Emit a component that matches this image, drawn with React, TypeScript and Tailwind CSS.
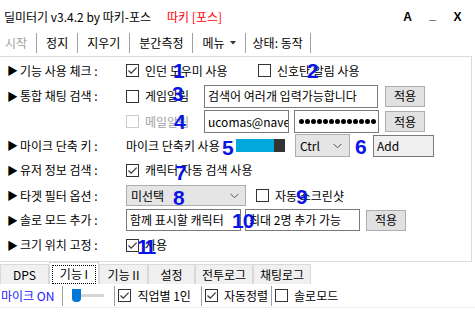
import React from "react";

function Check({ checked = false, disabled = false }: { checked?: boolean; disabled?: boolean }) {
  return (
    <span
      className={
        "flex h-[13px] w-[13px] shrink-0 items-center justify-center border bg-white " +
        (disabled ? "border-[#cccccc]" : "border-[#333333]")
      }
    >
      {checked && (
        <svg width="11" height="11" viewBox="0 0 11 11">
          <path d="M1.5 5.5 L4.2 8.2 L9.6 2.6" fill="none" stroke="#333" strokeWidth="1.2" />
        </svg>
      )}
    </span>
  );
}

function Chevron() {
  return (
    <svg width="9" height="6" viewBox="0 0 9 6">
      <path d="M0.5 0.8 L4.5 4.8 L8.5 0.8" fill="none" stroke="#555" strokeWidth="1" />
    </svg>
  );
}

function Btn({ label }: { label: string }) {
  return (
    <div className="flex h-[21px] w-[40px] items-center justify-center border border-[#adadad] bg-[#e1e1e1]">
      {label}
    </div>
  );
}

function Label({ text }: { text: string }) {
  return (
    <div className="flex w-[126px] shrink-0 items-center pl-[7px]">
      <span className="w-[13px] text-[11px]">▶</span>
      <span>{text}</span>
    </div>
  );
}

function Num({ n, x, y, tight = false }: { n: string; x: number; y: number; tight?: boolean }) {
  return (
    <span
      className={
        "absolute font-['Liberation_Sans',sans-serif] text-[21px] font-bold leading-none text-[#0a14e6] " +
        (tight ? "tracking-[-3px]" : "tracking-[-1px]")
      }
      style={{ left: x, top: y }}
    >
      {n}
    </span>
  );
}

const menu = ["정지", "지우기", "분간측정"];
const tabs = [
  { t: "DPS", w: 49 },
  { t: "기능 I", w: 50, on: true },
  { t: "기능 II", w: 49 },
  { t: "설정", w: 47 },
  { t: "전투로그", w: 58 },
  { t: "채팅로그", w: 58 },
];

export default function App() {
  return (
    <div className="relative h-[315px] w-[475px] overflow-hidden bg-white font-['Noto_Sans_CJK_KR',sans-serif] text-[12px] leading-none text-black">
      {/* title bar */}
      <div className="flex h-[31px] items-center pl-[4px] pt-[3px]">
        <span>딜미터기 v3.4.2 by 따키-포스</span>
        <span className="ml-[16px] text-[#ff0000]">따키 [포스]</span>
        <div className="ml-auto flex pr-[5px] font-['Liberation_Sans',sans-serif] text-[12px] font-bold">
          <span className="w-[25px] text-center">A</span>
          <span className="w-[25px] -translate-y-[2px] text-center">_</span>
          <span className="w-[25px] text-center">X</span>
        </div>
      </div>

      {/* menu bar */}
      <div className="flex h-[24px] items-center pl-[5px]">
        <span className="pr-[9px] text-[#a0a0a0]">시작</span>
        {menu.map((m) => (
          <React.Fragment key={m}>
            <span className="h-[20px] w-px bg-[#a0a0a0]" />
            <span className="px-[9px]">{m}</span>
          </React.Fragment>
        ))}
        <span className="h-[20px] w-px bg-[#a0a0a0]" />
        <span className="flex items-center gap-[5px] px-[9px]">
          메뉴
          <svg width="6" height="4" viewBox="0 0 6 4">
            <path d="M0 0 L6 0 L3 3.5 Z" fill="#333" />
          </svg>
        </span>
        <span className="h-[20px] w-px bg-[#a0a0a0]" />
        <span className="px-[7px]">상태: 동작</span>
        <span className="h-[20px] w-px bg-[#a0a0a0]" />
      </div>

      {/* options panel */}
      <div className="mt-px h-[206px] w-[472px] border-t border-r border-b border-[#dcdcdc]">
        <div className="flex h-[26px] items-center pt-[1px]">
          <Label text="기능 사용 체크 :" />
          <div className="flex w-[132px] items-center gap-[6px]">
            <Check checked />
            <span>인던 도우미 사용</span>
          </div>
          <div className="flex items-center gap-[6px]">
            <Check />
            <span>신호탄 알림 사용</span>
          </div>
        </div>

        <div className="flex h-[26px] items-center">
          <Label text="통합 채팅 검색 :" />
          <div className="flex w-[78px] items-center gap-[6px]">
            <Check />
            <span>게임알림</span>
          </div>
          <div className="flex h-[23px] w-[174px] items-center border border-[#7a7a7a] px-[3px]">
            검색어 여러개 입력가능합니다
          </div>
          <div className="ml-[7px]">
            <Btn label="적용" />
          </div>
        </div>

        <div className="flex h-[25px] items-center">
          <div className="w-[126px]" />
          <div className="flex w-[78px] items-center gap-[6px]">
            <Check disabled />
            <span className="text-[#a0a0a0]">메일알림</span>
          </div>
          <div className="flex h-[23px] w-[85px] items-center overflow-hidden whitespace-nowrap border border-[#7a7a7a] px-[3px]">
            ucomas@naver
          </div>
          <div className="ml-[5px] flex h-[23px] w-[85px] items-center gap-[1px] overflow-hidden border border-[#7a7a7a] pl-[4px]">
            {Array.from({ length: 13 }).map((_, i) => (
              <span key={i} className="h-[5px] w-[5px] shrink-0 rounded-full bg-black" />
            ))}
          </div>
          <div className="ml-[6px]">
            <Btn label="적용" />
          </div>
        </div>

        <div className="flex h-[23px] items-center">
          <Label text="마이크 단축 키 :" />
          <div className="w-[110px]">마이크 단축키 사용</div>
          <div className="flex h-[13px]">
            <span className="w-[38px] bg-[#00a8dc]" />
            <span className="w-[11px] bg-[#333333]" />
          </div>
          <div className="ml-[10px] flex h-[23px] w-[55px] items-center justify-between border border-[#adadad] bg-[#e5e5e5] pl-[4px] pr-[7px]">
            <span>Ctrl</span>
            <Chevron />
          </div>
          <div className="ml-[23px] flex h-[22px] w-[61px] items-center border border-[#7a7a7a] bg-[#f0f0f0] px-[3px]">
            Add
          </div>
        </div>

        <div className="flex h-[26px] items-center">
          <Label text="유저 정보 검색 :" />
          <div className="flex items-center gap-[6px]">
            <Check checked />
            <span>캐릭터 자동 검색 사용</span>
          </div>
        </div>

        <div className="flex h-[25px] items-center">
          <Label text="타겟 필터 옵션 :" />
          <div className="flex h-[21px] w-[120px] items-center justify-between border border-[#adadad] bg-[#e5e5e5] pl-[4px] pr-[6px]">
            <span>미선택</span>
            <Chevron />
          </div>
          <div className="ml-[10px] flex items-center gap-[6px]">
            <Check />
            <span>자동 스크린샷</span>
          </div>
        </div>

        <div className="flex h-[24px] items-center">
          <Label text="솔로 모드 추가 :" />
          <div className="flex h-[22px] w-[115px] items-center border border-[#7a7a7a] px-[3px]">
            함께 표시할 캐릭터
          </div>
          <div className="ml-[4px] flex h-[22px] w-[115px] items-center border border-[#7a7a7a] px-[3px]">
            최대 2명 추가 가능
          </div>
          <div className="ml-[6px]">
            <Btn label="적용" />
          </div>
        </div>

        <div className="flex h-[26px] items-center">
          <Label text="크기 위치 고정 :" />
          <div className="flex items-center gap-[6px]">
            <Check checked />
            <span>사용</span>
          </div>
        </div>
      </div>

      {/* tabs */}
      <div className="flex h-[22px] items-end">
        {tabs.map((tab) => (
          <div
            key={tab.t}
            className={
              "flex items-center justify-center border border-b-0 border-[#d9d9d9] " +
              (tab.on ? "h-[22px] bg-white px-[2px] pt-[1px]" : "h-[20px] bg-[#f0f0f0]")
            }
            style={{ width: tab.w }}
          >
            {tab.on ? (
              <span className="flex h-[19px] w-full items-center justify-center border border-dotted border-black">
                {tab.t}
              </span>
            ) : (
              tab.t
            )}
          </div>
        ))}
      </div>

      {/* bottom bar */}
      <div className="flex h-[24px] items-center border-b border-[#ececec] pl-[1px]">
        <span className="text-[#2020ff]">마이크 ON</span>
        <span className="ml-[8px] h-[20px] w-px bg-[#a0a0a0]" />
        <div className="ml-[9px] flex w-[32px] items-center">
          <span className="h-[13px] w-[9px] rounded-b-[4px] bg-[#0078d7]" />
          <span className="h-[3px] flex-1 bg-[#d6d6d6]" />
        </div>
        <span className="ml-[10px] h-[20px] w-px bg-[#a0a0a0]" />
        <div className="ml-[3px] flex items-center gap-[6px]">
          <Check checked />
          <span>직업별 1인</span>
        </div>
        <span className="ml-[10px] h-[20px] w-px bg-[#a0a0a0]" />
        <div className="ml-[3px] flex items-center gap-[6px]">
          <Check checked />
          <span>자동정렬</span>
        </div>
        <span className="ml-[3px] h-[20px] w-px bg-[#a0a0a0]" />
        <div className="ml-[3px] flex items-center gap-[6px]">
          <Check />
          <span>솔로모드</span>
        </div>
      </div>

      {/* annotation numbers */}
      <Num n="1" x={173} y={60} />
      <Num n="2" x={307} y={60} />
      <Num n="3" x={172} y={83} />
      <Num n="4" x={174} y={111} />
      <Num n="5" x={222} y={137} />
      <Num n="6" x={355} y={136} />
      <Num n="7" x={175} y={162} />
      <Num n="8" x={173} y={187} />
      <Num n="9" x={296} y={186} />
      <Num n="10" x={232} y={210} />
      <Num n="11" x={137} y={236} tight />
    </div>
  );
}
